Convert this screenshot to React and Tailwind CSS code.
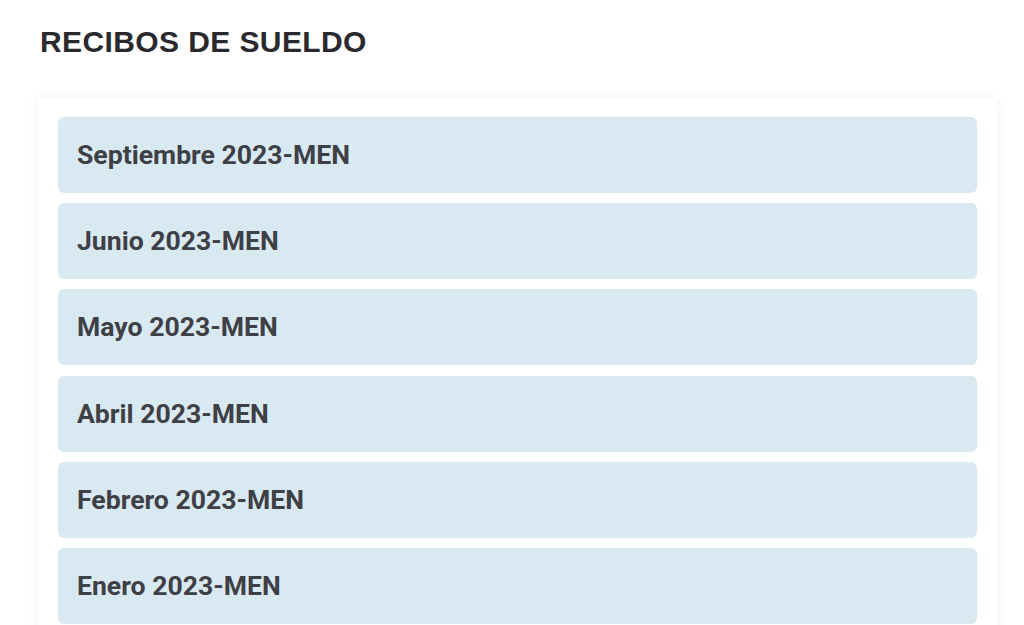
import React from "react";

const items = [
  "Septiembre 2023-MEN",
  "Junio 2023-MEN",
  "Mayo 2023-MEN",
  "Abril 2023-MEN",
  "Febrero 2023-MEN",
  "Enero 2023-MEN",
];

export default function App() {
  return (
    <div className="min-h-[625px] w-[1024px] bg-white overflow-hidden">
      <div className="pl-[40px] pt-[26px] pr-[27px]">
        <h1
          className="text-[30px] leading-[32px] font-bold text-[#2a2a2e] tracking-[0.4px]"
          style={{ fontFamily: '"Liberation Sans", Arial, sans-serif' }}
        >
          RECIBOS DE SUELDO
        </h1>
        <div className="mt-[40px] -ml-[2px] bg-white shadow-[0_0_12px_rgba(0,0,0,0.06)] px-[20px] pt-[19px] pb-[20px] flex flex-col gap-[10.2px]">
          {items.map((t) => (
            <div
              key={t}
              className="h-[76px] rounded-[6px] bg-[#d9e9f1] flex items-center pl-[19px]"
            >
              <span
                className="text-[26.6px] font-bold text-[#3f3f46]"
                style={{ fontFamily: "Roboto, sans-serif" }}
              >
                {t}
              </span>
            </div>
          ))}
        </div>
      </div>
    </div>
  );
}
